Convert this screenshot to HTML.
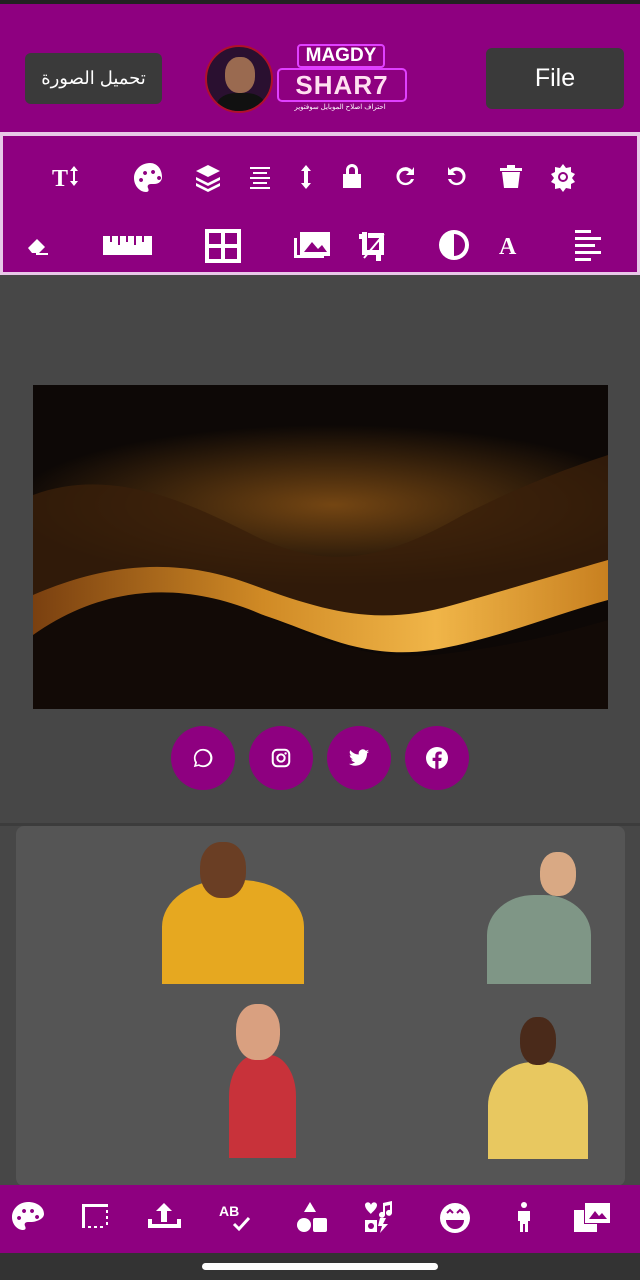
<!DOCTYPE html>
<html><head><meta charset="utf-8"><style>
*{margin:0;padding:0;box-sizing:border-box}
body{width:640px;height:1280px;background:#474747;position:relative;overflow:hidden;font-family:"Liberation Sans","Noto Sans CJK SC",sans-serif}
.a{position:absolute}
.ic{position:absolute;fill:#fff}
.btn{position:absolute;background:#3a3a3a;border-radius:6px;color:#fff;display:flex;align-items:center;justify-content:center}
.soc{position:absolute;top:726px;width:64px;height:64px;border-radius:50%;background:#8e0080;display:flex;align-items:center;justify-content:center}
</style></head><body>
<div class="a" style="left:0;top:0;width:640px;height:4px;background:#222"></div>
<div class="a" style="left:0;top:4px;width:640px;height:128px;background:#8e0080"></div>
<div class="btn" style="left:25px;top:53px;width:137px;height:51px;font-size:18px">تحميل الصورة</div>
<div class="btn" style="left:486px;top:48px;width:138px;height:61px;font-size:25px">File</div>
<div class="a" style="left:205px;top:45px;width:68px;height:68px;border-radius:50%;background:#2a1030;border:2px solid #b0102a;overflow:hidden">
 <div class="a" style="left:18px;top:10px;width:30px;height:36px;border-radius:45%;background:#9a6a50"></div>
 <div class="a" style="left:10px;top:46px;width:48px;height:30px;border-radius:40%;background:#111"></div>
</div>
<div class="a" style="left:297px;top:44px;width:88px;height:24px;border:2px solid #e040ff;border-radius:4px;color:#fff;font-weight:bold;font-size:19px;text-align:center;line-height:20px">MAGDY</div>
<div class="a" style="left:277px;top:68px;width:130px;height:34px;border:2px solid #e040ff;border-radius:5px;color:#ffe0f0;font-weight:bold;font-size:26px;text-align:center;line-height:30px;letter-spacing:1px">SHAR7</div>
<div class="a" style="left:290px;top:103px;width:100px;font-size:7px;color:#fff;text-align:center">احتراف اصلاح الموبايل سوفتوير</div>
<div class="a" style="left:0;top:132px;width:640px;height:143px;background:#e8c8e8"></div>
<div class="a" style="left:3px;top:136px;width:634px;height:136px;background:#8e0080"></div>
<svg class="ic" style="left:0;top:150px" width="640" height="120" viewBox="0 150 640 120">
 <text x="52" y="186" font-family="Liberation Serif" font-weight="bold" font-size="24" fill="#fff">T</text>
 <path d="M74 166l4 5h-3v10h3l-4 5-4-5h3v-10h-3z" fill="#fff"/>
 <path d="M150 163c-9 0-16 7-16 15s6 14 12 14c3 0 3-2 2-4-1-2 0-4 3-4h3c5 0 8-3 8-7 0-8-5-14-12-14zM141 178a2 2 0 1 0 0.1 0zM145 171a2 2 0 1 0 0.1 0zM153 170a2 2 0 1 0 0.1 0zM159 176a2 2 0 1 0 0.1 0z" fill="#fff" fill-rule="evenodd"/>
 <path d="M208 165l12 6-12 6-12-6zM196 177l12 6 12-6v3l-12 6-12-6zM196 183l12 6 12-6v3l-12 6-12-6z"/>
 <path d="M250 167h20v2h-20zM253 172h14v2h-14zM250 177h20v2h-20zM253 182h14v2h-14zM250 187h20v2h-20z"/>
 <path d="M306 165l5 6h-3v12h3l-5 6-5-6h3v-12h-3z"/>
 <path d="M346 174v-4a6 6 0 0 1 12 0v4h3v14h-18v-14zM349 174h6v-4a3 3 0 0 0-6 0z" fill-rule="evenodd"/>
 <path d="M412 170a9 9 0 1 0 2 9h-3a6 6 0 1 1-2-7l-3 3h8v-8z"/>
 <path d="M450 170a9 9 0 1 1-2 9h3a6 6 0 1 0 2-7l3 3h-8v-8z"/>
 <path d="M500 168h22v3h-22zM507 165h8v3h-8zM502 172h18l-2 16h-14z"/>
 <path d="M563 164l3 4 5-1 0 5 4 2-3 4 3 4-4 2 0 5-5-1-3 4-3-4-5 1 0-5-4-2 3-4-3-4 4-2 0-5 5 1z"/><circle cx="563" cy="177" r="5" fill="#8e0080"/><circle cx="563" cy="177" r="3"/>
 <path d="M28 248l9-9 8 8-6 6h-7zM36 253h12v2h-12z"/>
 <path d="M103 236h49v19h-49zM110 236v6h2v-6zM118 236v9h2v-9zM126 236v6h2v-6zM134 236v9h2v-9zM142 236v6h2v-6z" fill-rule="evenodd"/>
 <path d="M205 229h36v34h-36zM209 233v11h12v-11zM225 233v11h12v-11zM209 248v11h12v-11zM225 248v11h12v-11z" fill-rule="evenodd"/>
 <path d="M300 232h30v24h-30zM304 252l8-10 6 7 4-4 5 7z" fill-rule="evenodd"/>
 <path d="M294 238v20h30v-3h-27v-17z"/>
 <path d="M363 233v21h20v-3h-17v-18zM377 256v4h3v-4zM360 238h4v-3h-4zM369 237h11v12h3v-15h-14zM364 258l20-24" stroke="#fff" stroke-width="2"/>
 <circle cx="454" cy="245" r="15"/><path d="M454 234a11 11 0 0 1 0 22z" fill="#8e0080"/>
 <text x="499" y="254" font-family="Liberation Serif" font-weight="bold" font-size="24" fill="#fff">A</text>
 <path d="M575 230h16v3h-16zM575 237h26v3h-26zM575 244h20v3h-20zM575 251h26v3h-26zM575 258h16v3h-16z"/>
</svg>
<!-- image -->
<svg class="a" style="left:33px;top:385px" width="575" height="324" viewBox="0 0 575 324">
 <defs>
  <linearGradient id="g1" x1="0" y1="0" x2="1" y2="0"><stop offset="0" stop-color="#7a4010"/><stop offset=".4" stop-color="#d08a25"/><stop offset=".7" stop-color="#f0b548"/><stop offset="1" stop-color="#c88020"/></linearGradient>
  <radialGradient id="g2" cx=".5" cy=".5" r=".5"><stop offset="0" stop-color="#a06018" stop-opacity=".7"/><stop offset="1" stop-color="#a06018" stop-opacity="0"/></radialGradient>
 </defs>
 <rect width="575" height="324" fill="#0d0806"/>
 <ellipse cx="300" cy="120" rx="320" ry="80" fill="url(#g2)"/>
 <path d="M0 110C80 80 160 120 220 150 300 190 360 170 430 130 500 95 545 80 575 70V200C520 215 460 240 400 250 330 260 290 230 230 205 150 180 70 200 0 240Z" fill="#3a1f0a" opacity=".8"/>
 <path d="M0 210C70 180 140 170 220 200 300 230 350 240 420 220 490 200 540 185 575 175V215C520 230 460 255 400 265 330 275 290 250 230 230 150 210 70 225 0 260Z" fill="url(#g1)"/>
 <path d="M0 250C70 200 150 195 230 230 290 255 330 275 400 270 480 262 540 245 575 235V324H0Z" fill="#120a06"/>
</svg>
<div class="soc" style="left:171px"><svg width="22" height="22" viewBox="0 0 24 24"><path d="M12 2a10 10 0 0 0-8.6 15L2 22l5.2-1.4A10 10 0 1 0 12 2zm0 2a8 8 0 1 1-4.3 14.8l-3 .8.8-2.9A8 8 0 0 1 12 4z" fill="#fff"/></svg></div>
<div class="soc" style="left:249px"><svg width="22" height="22" viewBox="0 0 24 24"><rect x="3" y="3" width="18" height="18" rx="5" fill="none" stroke="#fff" stroke-width="2.2"/><circle cx="12" cy="12" r="4" fill="none" stroke="#fff" stroke-width="2.2"/><circle cx="17" cy="7" r="1.3" fill="#fff"/></svg></div>
<div class="soc" style="left:327px"><svg width="24" height="22" viewBox="0 0 24 24"><path d="M23 5a9 9 0 0 1-2.6.7A4.5 4.5 0 0 0 22.4 3a9 9 0 0 1-2.9 1.1 4.5 4.5 0 0 0-7.7 4.1A12.8 12.8 0 0 1 2.5 3.5a4.5 4.5 0 0 0 1.4 6 4.5 4.5 0 0 1-2-.6 4.5 4.5 0 0 0 3.6 4.4 4.5 4.5 0 0 1-2 .1 4.5 4.5 0 0 0 4.2 3.1A9 9 0 0 1 1 18.4 12.8 12.8 0 0 0 7.9 20.4c8.3 0 12.8-6.9 12.8-12.8v-.6A9 9 0 0 0 23 5z" fill="#fff"/></svg></div>
<div class="soc" style="left:405px"><svg width="24" height="24" viewBox="0 0 24 24"><circle cx="12" cy="12" r="11" fill="#fff"/><path d="M13.5 23v-8h2.7l.4-3.2h-3.1V9.9c0-.9.3-1.5 1.6-1.5h1.6V5.6a22 22 0 0 0-2.4-.1c-2.4 0-4 1.4-4 4.1v2.2H7.6V15h2.7v8z" fill="#8e0080"/></svg></div>
<div class="a" style="left:0;top:823px;width:640px;height:3px;background:#3c3c3c"></div>
<div class="a" style="left:16px;top:826px;width:609px;height:360px;background:#555;border-radius:8px"></div>
<div class="a" style="left:162px;top:880px;width:142px;height:104px;border-radius:45% 45% 0 0;background:#e6a820"></div>
<div class="a" style="left:200px;top:842px;width:46px;height:56px;border-radius:45%;background:#6a3e24"></div>
<div class="a" style="left:487px;top:895px;width:104px;height:89px;border-radius:45% 45% 0 0;background:#7f9686"></div>
<div class="a" style="left:540px;top:852px;width:36px;height:44px;border-radius:45%;background:#d9a984"></div>
<div class="a" style="left:229px;top:1055px;width:67px;height:103px;border-radius:40% 40% 0 0;background:#c8323a"></div>
<div class="a" style="left:236px;top:1004px;width:44px;height:56px;border-radius:45%;background:#d9a080"></div>
<div class="a" style="left:488px;top:1062px;width:100px;height:97px;border-radius:45% 45% 0 0;background:#e8c860"></div>
<div class="a" style="left:520px;top:1017px;width:36px;height:48px;border-radius:45%;background:#4a2a1a"></div>
<div class="a" style="left:0;top:1185px;width:640px;height:68px;background:#8e0080"></div>
<svg class="ic" style="left:0;top:1185px" width="640" height="68" viewBox="0 1185 640 68">
 <path d="M28 1202c-9 0-16 7-16 15s6 13 11 13c3 0 3-2 2-4-1-2 0-4 3-4h3c5 0 13-3 13-8 0-7-7-12-16-12zM19 1216a2 2 0 1 0 .1 0zM24 1209a2 2 0 1 0 .1 0zM32 1209a2 2 0 1 0 .1 0zM37 1215a2 2 0 1 0 .1 0z" fill-rule="evenodd"/>
 <path d="M82 1204h26v3h-23v21h-3z"/><path d="M106 1210h2v3h-2zM106 1216h2v3h-2zM106 1222h2v3h-2zM88 1226h3v2h-3zM94 1226h3v2h-3zM100 1226h3v2h-3z"/>
 <path d="M164 1203l8 8h-5v11h-6v-11h-5zM148 1219h4v5h25v-5h4v9h-33z"/>
 <text x="219" y="1216" font-weight="bold" font-size="14" fill="#fff">AB</text>
 <path d="M234 1224l5 5 10-11" stroke="#fff" stroke-width="3" fill="none"/>
 <path d="M310 1202l6 10h-12z"/><circle cx="304" cy="1225" r="7"/><rect x="313" y="1218" width="14" height="14" rx="2"/>
 <path d="M365 1205c0-3 5-4 6 0 1-4 6-3 6 0 0 4-6 8-6 9-1-1-6-5-6-9zM383 1203l9-2v12a3 3 0 1 1-2-3v-5l-5 1v9a3 3 0 1 1-2-3zM365 1220h12v12h-12zM380 1218l6 0-3 6h5l-8 9 2-7h-4z"/><circle cx="371" cy="1226" r="3" fill="#8e0080"/>
 <circle cx="455" cy="1218" r="15"/><path d="M446 1220h18a9 9 0 0 1-18 0z" fill="#8e0080"/><path d="M447 1213l3-3 3 3M457 1213l3-3 3 3" stroke="#8e0080" stroke-width="2" fill="none"/>
 <circle cx="524" cy="1205" r="3"/><path d="M518 1211h12v10h-2v11h-3v-8h-2v8h-3v-11h-2z"/>
 <path d="M585 1203h25v20h-25zM589 1219l6-8 4 5 3-3 5 6z" fill-rule="evenodd"/><path d="M574 1210h10v22h-10zM584 1224h13v8h-13z"/>
</svg>
<div class="a" style="left:0;top:1253px;width:640px;height:27px;background:#333"></div>
<div class="a" style="left:202px;top:1263px;width:236px;height:7px;border-radius:4px;background:#fff"></div>
</body></html>
